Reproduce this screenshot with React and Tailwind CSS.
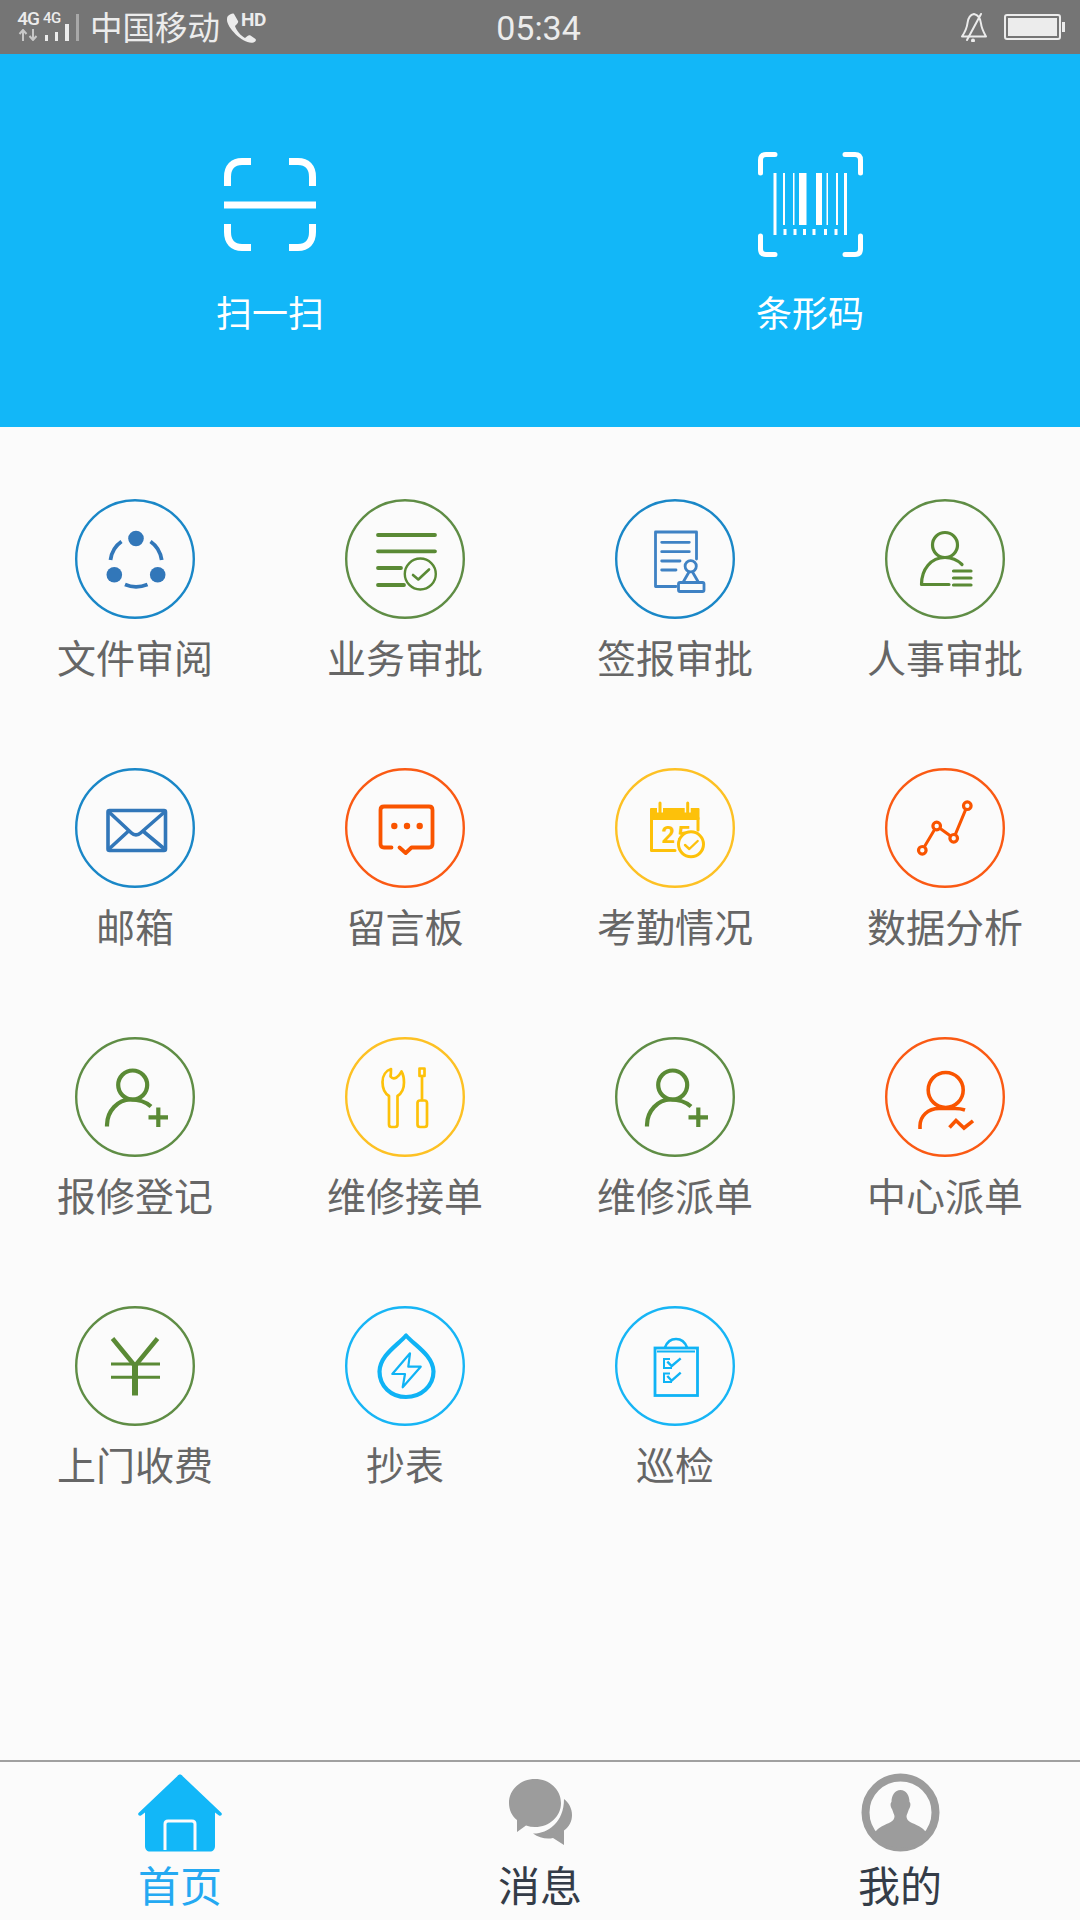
const BLUE = "#1a87c7";
const GREEN = "#5f8d45";
const ORANGE = "#fa5a14";
const YELLOW = "#fdc124";
const SKY = "#17b5f5";

// circle + glyph share one 120x120 canvas
const Ring = ({ color, children }) => (
  <svg width="120" height="120" viewBox="0 0 120 120" fill="none" strokeLinecap="round" strokeLinejoin="round">
    <circle cx="60" cy="60" r="58.8" stroke={color} strokeWidth="2.4" />
    {children}
  </svg>
);

const ShareIcon = () => (
  <Ring color={BLUE}>
    <g fill="#3277b9">
      <circle cx="61" cy="39.5" r="7.8" />
      <circle cx="39.3" cy="75.7" r="7.8" />
      <circle cx="82.7" cy="75.7" r="7.8" />
    </g>
    <g stroke="#3277b9" strokeWidth="3.8" strokeLinecap="butt">
      <path d="M35.5 61C36.5 53 40 47 46.5 42.5" />
      <path d="M75.5 42.5C82 47 85.5 53 86.7 61" />
      <path d="M50 85.5C57 88.5 65 88.5 72.5 85.5" />
    </g>
  </Ring>
);

const ApproveIcon = () => (
  <Ring color={GREEN}>
    <g stroke="#5a8a35" strokeWidth="3.8">
      <path d="M33 36H90M33 52.3H90M33 69H56M33 86H59" />
    </g>
    <circle cx="75.3" cy="75" r="15.5" stroke="#5a8a35" strokeWidth="2.4" />
    <path d="M68 76L73.3 80.5L84 70.5" stroke="#5a8a35" strokeWidth="2.6" />
  </Ring>
);

const StampIcon = () => (
  <Ring color={BLUE}>
    <g stroke="#3f82c4" strokeWidth="2.8">
      <path d="M81.500 60V33H40.500V87.500H61" />
      <path d="M46.700 43.300H74.300M46.700 52.700H74.300M46.700 62H65M46.700 71H61" />
      <circle cx="75.700" cy="67.300" r="5.600" />
      <path d="M74 73L68.500 82.500M77.500 73L83 82.500" />
      <rect x="63.500" y="83.500" width="25.500" height="9" rx="1.500" />
    </g>
  </Ring>
);

const PersonListIcon = () => (
  <Ring color={GREEN}>
    <g stroke="#5a8a35" strokeWidth="3.2">
      <circle cx="60" cy="46" r="12.500" />
      <path d="M77 65.500C72 60.500 66 58.500 60 58.500C46 58.500 36.500 70 36.500 85.500H64" />
      <path d="M68.500 72H86M68.500 79H86M68.500 86H86" />
    </g>
  </Ring>
);

const MailIcon = () => (
  <Ring color={BLUE}>
    <g stroke="#3277b9" strokeWidth="3.6">
      <rect x="33" y="42.500" width="57.500" height="40" rx="1.500" />
      <path d="M34 44L56.500 65C59 67.500 63 67.500 65.500 65L89.500 44" />
      <path d="M34 81L53 63.500M89.500 81L68.500 63.500" />
    </g>
  </Ring>
);

const BubbleIcon = () => (
  <Ring color={ORANGE}>
    <path
      d="M46.500 79.500H39C36.500 79.500 35.500 78 35.500 76V42C35.500 39.500 37 38.500 39 38.500H84C86.500 38.500 87.500 40 87.500 42V76C87.500 78.500 86 79.500 84 79.500H66.500L60.700 85L54.500 79.500"
      stroke="#f95400"
      strokeWidth="3.800"
    />
    <g fill="#f95400">
      <circle cx="49.300" cy="58" r="3.200" />
      <circle cx="62" cy="58" r="3.200" />
      <circle cx="74.700" cy="58" r="3.200" />
    </g>
  </Ring>
);

const CalendarIcon = () => (
  <Ring color={YELLOW}>
    <path d="M36 41H83.500V51H36Z" fill="#fdc10a" stroke="#fdc10a" strokeWidth="2" />
    <path d="M36.500 50V82.500H60M83 50V62" stroke="#fdc10a" strokeWidth="3" />
    <path d="M45 35V44.500M72.700 35V44.500" stroke="#fbfbfb" strokeWidth="6" strokeLinecap="butt" />
    <path d="M45 35V44.500M72.700 35V44.500" stroke="#fdc10a" strokeWidth="3" />
    <text x="46.500" y="74.500" fontSize="24" fontWeight="700" fontFamily="Roboto, sans-serif" fill="#fdc10a" letterSpacing="2">25</text>
    <circle cx="76" cy="76.300" r="12.500" fill="#fbfbfb" stroke="#fdc10a" strokeWidth="3" />
    <path d="M70 77L74.300 81L82.700 73" stroke="#fdc10a" strokeWidth="2.400" />
  </Ring>
);

const ChartIcon = () => (
  <Ring color={ORANGE}>
    <path d="M37.300 82.300L51.700 58L68.700 70.300L82.300 37.700" stroke="#f95400" strokeWidth="3" />
    <g fill="#fbfbfb" stroke="#f95400" strokeWidth="3.200">
      <circle cx="37.300" cy="82.300" r="3.800" />
      <circle cx="51.700" cy="58" r="3.800" />
      <circle cx="68.700" cy="70.300" r="3.800" />
      <circle cx="82.300" cy="37.700" r="3.800" />
    </g>
  </Ring>
);

const AddPersonIcon = () => (
  <Ring color={GREEN}>
    <g stroke="#5a8a35" strokeWidth="4.200">
      <circle cx="57.700" cy="48" r="14.500" />
      <path d="M32 89.500V88C32 74 43 62.500 55.500 62.500C63 62.500 71 65 76 69.500" strokeLinecap="butt" />
      <path d="M73.500 80.300H93M83.300 70.500V90" strokeLinecap="butt" />
    </g>
  </Ring>
);

const ToolsIcon = () => (
  <Ring color={YELLOW}>
    <g stroke="#fdc10a" strokeWidth="2.700">
      <path d="M44 59V87.500C44 89.500 45 90 46.500 90H50C51.500 90 52.500 89.500 52.500 87.500V59C56.500 56.500 59 51 59 45.500C59 41 58 37 56.500 34.500C55 37.500 53.500 39 51.500 40.500C49 42 47 41.500 45.500 39.500C46 37 46 34.500 46 32C41 33.500 37.500 38.500 37.500 45C37.500 51 40 56.500 44 59Z" />
      <rect x="74.500" y="31.500" width="5" height="7.500" />
      <path d="M77 39V63" />
      <rect x="72.500" y="63.500" width="9.500" height="26.500" rx="2.500" />
    </g>
  </Ring>
);

const PersonTrendIcon = () => (
  <Ring color={ORANGE}>
    <g stroke="#f95400" strokeWidth="3.600">
      <circle cx="60.700" cy="53" r="17.500" />
      <path d="M35 92V89C35 79 43 71.500 54 71.500H70C73 71.500 77 72 80 73" strokeLinecap="butt" />
      <path d="M64.500 90.500L71 83.500L79 91L88 83.800" strokeLinecap="butt" strokeLinejoin="miter" />
    </g>
  </Ring>
);

const YenIcon = () => (
  <Ring color={GREEN}>
    <path d="M37.500 32.500L60 60L82.500 32.500" stroke="#5a8a35" strokeWidth="4.500" strokeLinecap="butt" strokeLinejoin="miter" />
    <path d="M36 58H85M36 71.300H85" stroke="#5a8a35" strokeWidth="3" strokeLinecap="butt" />
    <path d="M60 57V89.500" stroke="#5a8a35" strokeWidth="6" strokeLinecap="butt" />
  </Ring>
);

const DropIcon = () => (
  <Ring color={SKY}>
    <path
      d="M61 29.500C53 39 35 49 34.500 65.500C34.500 80 46 91 61 91C76 91 88.500 80 88.500 65.500C88 49 69 39 61 29.500Z"
      stroke="#0fb3f5"
      strokeWidth="4.200"
    />
    <path d="M65 47.300L47.300 68H60L57.700 81.300L75.700 60.700H63.300Z" stroke="#0fb3f5" strokeWidth="2.200" />
  </Ring>
);

const ClipboardIcon = () => (
  <Ring color={SKY}>
    <g stroke="#0fb3f5" strokeLinecap="butt" strokeLinejoin="miter">
      <rect x="40" y="42" width="42.500" height="47.500" strokeWidth="2.800" />
      <path d="M42 45.500H80" strokeWidth="1.800" />
      <path d="M50 41.500C52 36 56 33 61 33C66 33 70 36 72 41.500" strokeWidth="2.600" />
      <path d="M55 53H49V62H57M55 67.500H49V76H57" strokeWidth="2" />
      <path d="M52.300 55.700L56.700 60L65.700 52.300M52.300 70L56.700 74.700L65.700 66.700" strokeWidth="2.400" />
    </g>
  </Ring>
);

const menus = [
  { name: "文件审阅", Icon: ShareIcon },
  { name: "业务审批", Icon: ApproveIcon },
  { name: "签报审批", Icon: StampIcon },
  { name: "人事审批", Icon: PersonListIcon },
  { name: "邮箱", Icon: MailIcon },
  { name: "留言板", Icon: BubbleIcon },
  { name: "考勤情况", Icon: CalendarIcon },
  { name: "数据分析", Icon: ChartIcon },
  { name: "报修登记", Icon: AddPersonIcon },
  { name: "维修接单", Icon: ToolsIcon },
  { name: "维修派单", Icon: AddPersonIcon },
  { name: "中心派单", Icon: PersonTrendIcon },
  { name: "上门收费", Icon: YenIcon },
  { name: "抄表", Icon: DropIcon },
  { name: "巡检", Icon: ClipboardIcon },
];

const MutedBell = () => (
  <svg width="28" height="30" viewBox="0 0 28 30" fill="none" stroke="#ececec" strokeWidth="2" strokeLinecap="round" strokeLinejoin="round">
    <path d="M14 2C9 3 8 7 7.500 11C7 16 5 20 2 24.500H26C23.500 20 21.500 16.500 21 11.500C20.500 7 19 3 14 2Z" />
    <path d="M21 2L7 28" />
    <circle cx="13" cy="28.500" r="1" fill="#ececec" />
  </svg>
);

const StatusBar = () => (
  <div className="h-[54px] shrink-0 bg-[#757575] flex items-center text-[#ececec]">
    <div className="flex-1 flex items-center pl-[15px]">
      <div className="w-[26px] flex flex-col items-center">
        <span className="font-['Roboto',sans-serif] font-medium text-[19px] leading-[16px] tracking-[-1px] mt-[-2px]">4G</span>
        <svg width="20" height="12" viewBox="0 0 20 12" className="mt-[2px] opacity-70" fill="none" stroke="#ececec" strokeWidth="2">
          <path d="M5 12V2M1.500 5L5 1L8.500 5M15 0V10M11.500 7L15 11L18.500 7" />
        </svg>
      </div>
      <div className="relative w-[39px] h-[28px] ml-[2px] self-end mb-[13px] flex items-end">
        <span className="absolute left-0 top-[-1px] font-['Roboto',sans-serif] font-medium text-[15px] leading-[12px] tracking-[-0.5px]">4G</span>
        <div className="flex items-end gap-[7px] ml-[2px]">
          <div className="w-[3px] h-[6px] bg-[#ececec]" />
          <div className="w-[3px] h-[9px] bg-[#ececec]" />
          <div className="w-[4px] h-[17px] bg-[#ececec]" />
          <div className="w-[3px] h-[27px] bg-[#a8a8a8]" />
        </div>
      </div>
      <span className="ml-[8px] text-[32.500px] leading-[50px] mb-[3px] font-['Noto_Sans_CJK_SC',sans-serif] font-normal">中国移动</span>
      <div className="relative w-[42px] h-[32px] ml-[6px]">
        <svg width="32" height="30" viewBox="0 0 32 30" className="mt-[2px]">
          <path d="M2 3C4 1 7 0 8 1L12 8C12.500 9 12 10 11 11L9 13C10 17 15 23 19 25L21.500 23C22.500 22 23.500 22 24.500 22.500L29.500 26C30.500 27 29.500 29 27.500 29.500C18 32 1 15 1 7C1 5 1 4 2 3Z" fill="#ececec" />
        </svg>
        <span className="absolute left-[15px] top-[0px] font-['Roboto',sans-serif] font-bold text-[19px] leading-[18px] tracking-[-0.5px]">HD</span>
      </div>
    </div>
    <span className="font-['Roboto',sans-serif] font-normal text-[34px] leading-[54px] pt-[1px] mr-[3px]">05:34</span>
    <div className="flex-1 flex items-center justify-end gap-[16px] pr-[15px]">
      <MutedBell />
      <div className="flex items-center">
        <div className="w-[57px] h-[26px] border-2 border-[#ececec] rounded-[3px] p-[2px]">
          <div className="w-full h-full bg-[#ececec]" />
        </div>
        <div className="w-[3px] h-[10px] bg-[#ececec] ml-[1px]" />
      </div>
    </div>
  </div>
);

const ScanIcon = () => (
  <svg width="92" height="93" viewBox="0 0 92 93" fill="none" stroke="#fff" strokeWidth="7">
    <path d="M3.500 28V19C3.500 9 9 3.500 18 3.500H27" />
    <path d="M65 3.500H74C83 3.500 88.500 9 88.500 19V28" />
    <path d="M3.500 66V74C3.500 84 9 89.500 18 89.500H27" />
    <path d="M65 89.500H74C83 89.500 88.500 84 88.500 74V66" />
    <path d="M0 47H92" />
  </svg>
);

const BarcodeIcon = () => (
  <svg width="105" height="105" viewBox="0 0 105 105" fill="none" stroke="#fff">
    <g strokeWidth="5" strokeLinecap="round">
      <path d="M2.500 21V8C2.500 4.500 4.500 2.500 8 2.500H17" />
      <path d="M87 2.500H97C100.500 2.500 102.500 4.500 102.500 8V21" />
      <path d="M2.500 84V97C2.500 100.500 4.500 102.500 8 102.500H17" />
      <path d="M87 102.500H97C100.500 102.500 102.500 100.500 102.500 97V84" />
    </g>
    <g fill="#fff" stroke="none">
      <rect x="15.500" y="21" width="3" height="62" />
      <rect x="25" y="21" width="2" height="52" />
      <rect x="35" y="21" width="1.500" height="52" />
      <rect x="41" y="21" width="7.500" height="52" />
      <rect x="58" y="21" width="6" height="52" />
      <rect x="68.500" y="21" width="1.500" height="52" />
      <rect x="78" y="21" width="2" height="52" />
      <rect x="86" y="21" width="3" height="62" />
      <rect x="25.500" y="77" width="3" height="6" />
      <rect x="35.500" y="77" width="3" height="6" />
      <rect x="45" y="77" width="3" height="6" />
      <rect x="54.500" y="77" width="3" height="6" />
      <rect x="66" y="77" width="3" height="6" />
      <rect x="76.500" y="77" width="3" height="6" />
    </g>
  </svg>
);

const HomeIcon = () => (
  <svg width="84" height="78" viewBox="0 0 84 78" className="mt-[2px]">
    <path
      d="M42 0.500C43 0.500 44 1 44.500 2L83.500 39C84.500 40.500 83 42.500 81 41.500L77 38.500V72C77 75.500 75 77.500 72 77.500H12C9 77.500 7 75.500 7 72V38.500L3 41.500C1 42.500 -0.500 40.500 0.500 39L39.500 2C40 1 41 0.500 42 0.500Z"
      fill="#12b7f8"
    />
    <path d="M27 76V50C27 48 28 47 30 47H54C56 47 57 48 57 50V76" fill="none" stroke="#fbfbfb" strokeWidth="3" />
  </svg>
);

const ChatIcon = () => (
  <svg width="63" height="66" viewBox="0 0 63 66" fill="#9c9c9c">
    <path d="M26 0C40.500 0 52 10.500 52 24C52 37.500 40.500 48 26 48C23 48 20 47.500 17 46.500L8 53V41C3 37 0 31 0 24C0 10.500 11.500 0 26 0Z" />
    <path d="M55 20C60 24 63 29.500 63 36C63 42 60.500 47.500 55 51.500V66L44 59C38 60.500 30 59 24 54.500C38 55 55 44 55 20Z" />
  </svg>
);

const ProfileIcon = () => (
  <svg width="79" height="79" viewBox="0 0 79 79">
    <circle cx="39.500" cy="39.500" r="35" fill="#fbfbfb" stroke="#9c9c9c" strokeWidth="8" />
    <path
      d="M39.500 17C45 17 48.500 22 48.500 29C50 30 49.500 34 48 36C47 39 46 41 45.500 43C45.500 46 47 48 51 50C58 53 63 55 66 61C60 70 50 75 39.500 75C29 75 19 70 13 61C16 55 21 53 28 50C32 48 33.500 46 33.500 43C33 41 32 39 31 36C29.500 34 29 30 30.500 29C30.500 22 34 17 39.500 17Z"
      fill="#9c9c9c"
    />
  </svg>
);

const NavItem = ({ label, active, children }) => (
  <div className="flex flex-col items-center pt-[10px]">
    <div className="h-[80px] flex items-center justify-center">{children}</div>
    <span className={`mt-[8px] text-[42px] leading-[48px] ${active ? "text-[#24a9f2]" : "text-[#343c48]"}`}>{label}</span>
  </div>
);

const App = () => {
  return (
    <div className="w-[1080px] h-[1920px] flex flex-col bg-[#fbfbfb] overflow-hidden font-['Noto_Sans_CJK_SC',sans-serif] font-normal">
      <StatusBar />

      <div className="h-[373px] shrink-0 bg-[#12b7f8] grid grid-cols-2 pt-[98px] text-white">
        <div className="flex flex-col items-center">
          <div className="h-[105px] flex items-center justify-center"><ScanIcon /></div>
          <span className="mt-[31px] text-[36px] leading-[46px]">扫一扫</span>
        </div>
        <div className="flex flex-col items-center">
          <div className="h-[105px] flex items-center justify-center"><BarcodeIcon /></div>
          <span className="mt-[31px] text-[36px] leading-[46px]">条形码</span>
        </div>
      </div>

      <div className="flex-1 grid grid-cols-4 auto-rows-[269px] pt-[72px]">
        {menus.map(({ name, Icon }) => (
          <div key={name} className="flex flex-col items-center">
            <Icon />
            <span className="mt-[13px] text-[39px] leading-[48px] text-[#666]">{name}</span>
          </div>
        ))}
      </div>

      <div className="h-[160px] shrink-0 border-t-2 border-[#a0a0a0] grid grid-cols-3">
        <NavItem label="首页" active><HomeIcon /></NavItem>
        <NavItem label="消息"><ChatIcon /></NavItem>
        <NavItem label="我的"><ProfileIcon /></NavItem>
      </div>
    </div>
  );
};

export default App;
